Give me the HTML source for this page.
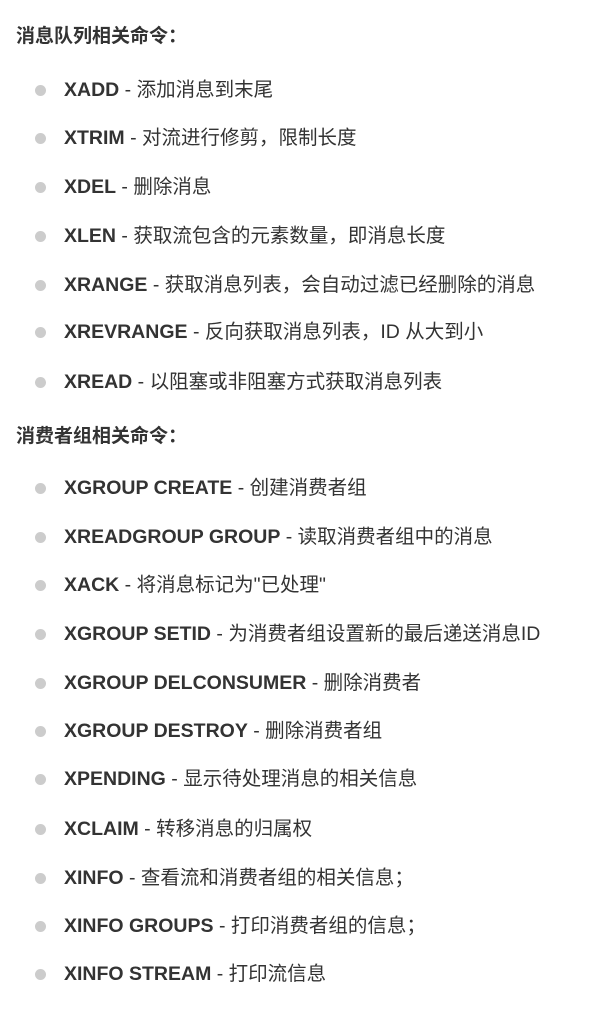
<!DOCTYPE html>
<html><head><meta charset="utf-8"><style>
body{margin:0;background:#fff;width:591px;height:1010px;overflow:hidden;font-family:"Liberation Sans","Noto Sans CJK SC",sans-serif;color:#333;}
.l{position:absolute;left:64px;font-size:19.5px;line-height:24px;white-space:nowrap;transform:translateY(-11px);}
.l b{font-weight:bold;}
.l:before{content:"";position:absolute;left:-29px;top:7px;width:11px;height:11px;border-radius:50%;background:#cccccc;}
.h{position:absolute;left:16px;font-size:19px;font-weight:bold;line-height:24px;transform:translateY(-12px);white-space:nowrap;}
</style></head><body>
<div class="h" style="top:37px">消息队列相关命令：</div>
<div class="l" style="top:89px"><b>XADD</b> - 添加消息到末尾</div>
<div class="l" style="top:137px"><b>XTRIM</b> - 对流进行修剪，限制长度</div>
<div class="l" style="top:186px"><b>XDEL</b> - 删除消息</div>
<div class="l" style="top:235px"><b>XLEN</b> - 获取流包含的元素数量，即消息长度</div>
<div class="l" style="top:284px"><b>XRANGE</b> - 获取消息列表，会自动过滤已经删除的消息</div>
<div class="l" style="top:331px"><b>XREVRANGE</b> - 反向获取消息列表，ID 从大到小</div>
<div class="l" style="top:381px"><b>XREAD</b> - 以阻塞或非阻塞方式获取消息列表</div>
<div class="h" style="top:437px">消费者组相关命令：</div>
<div class="l" style="top:487px"><b>XGROUP CREATE</b> - 创建消费者组</div>
<div class="l" style="top:536px"><b>XREADGROUP GROUP</b> - 读取消费者组中的消息</div>
<div class="l" style="top:584px"><b>XACK</b> - 将消息标记为"已处理"</div>
<div class="l" style="top:633px"><b>XGROUP SETID</b> - 为消费者组设置新的最后递送消息ID</div>
<div class="l" style="top:682px"><b>XGROUP DELCONSUMER</b> - 删除消费者</div>
<div class="l" style="top:730px"><b>XGROUP DESTROY</b> - 删除消费者组</div>
<div class="l" style="top:778px"><b>XPENDING</b> - 显示待处理消息的相关信息</div>
<div class="l" style="top:828px"><b>XCLAIM</b> - 转移消息的归属权</div>
<div class="l" style="top:877px"><b>XINFO</b> - 查看流和消费者组的相关信息；</div>
<div class="l" style="top:925px"><b>XINFO GROUPS</b> - 打印消费者组的信息；</div>
<div class="l" style="top:973px"><b>XINFO STREAM</b> - 打印流信息</div>
</body></html>
